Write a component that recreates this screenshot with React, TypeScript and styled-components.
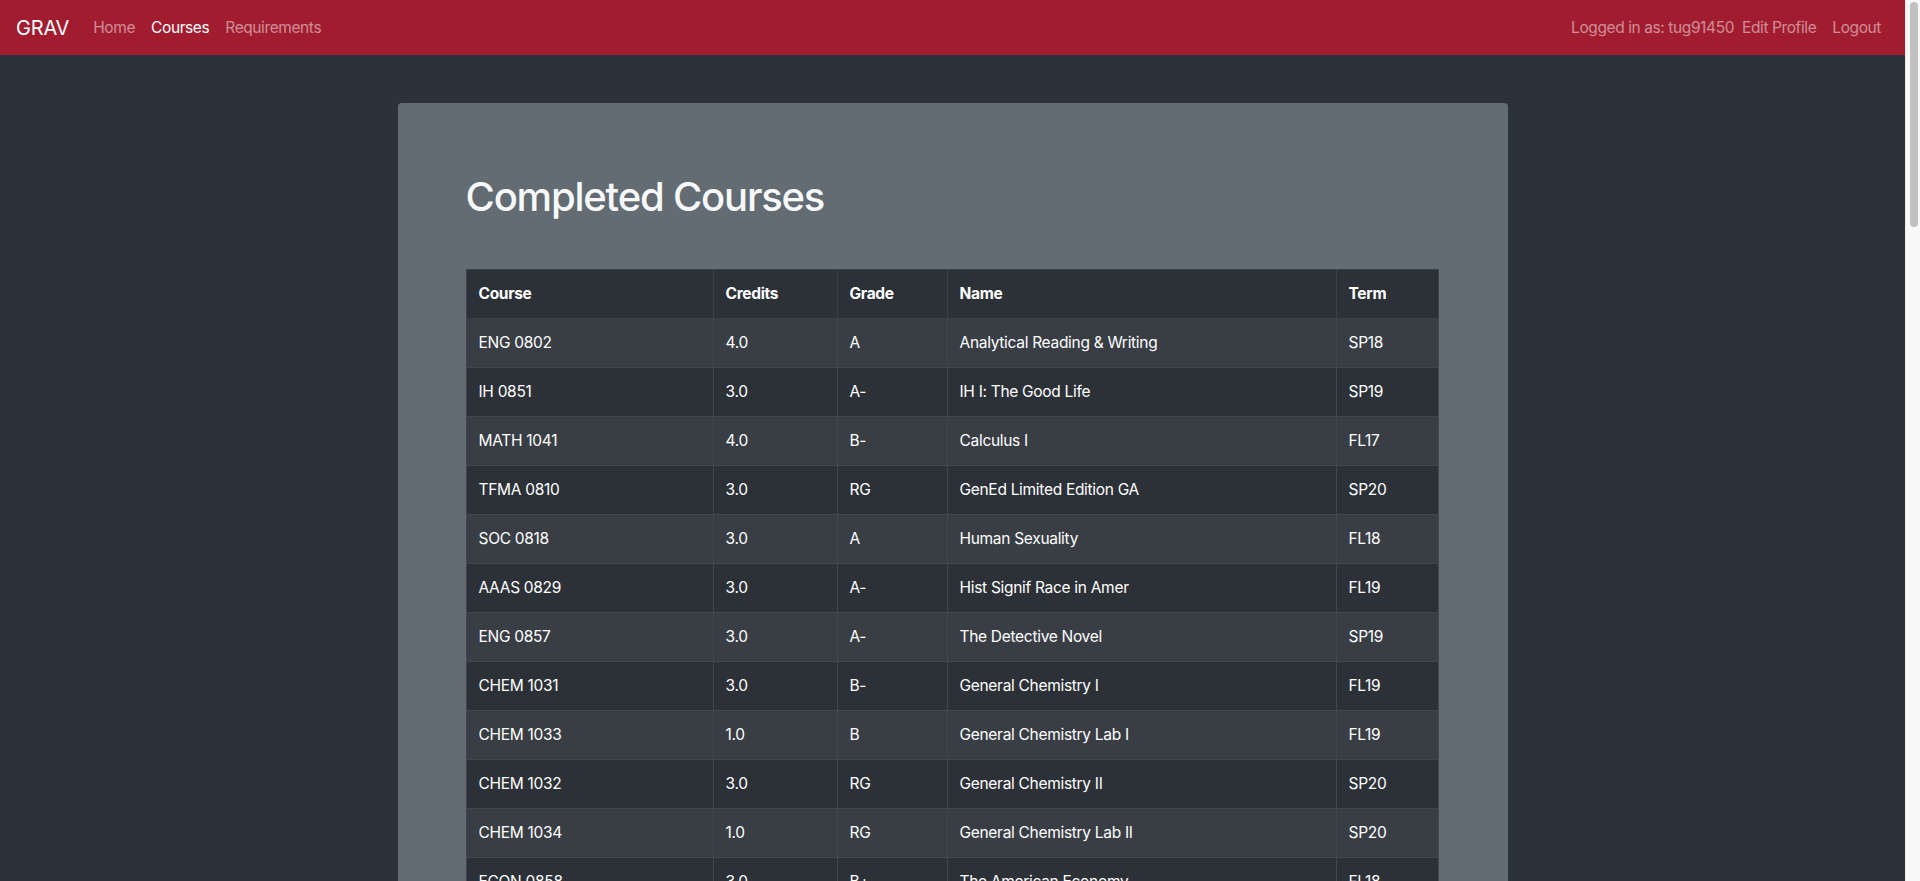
import React from "react";
import styled, { createGlobalStyle } from "styled-components";

const GlobalStyle = createGlobalStyle`
  html, body {
    margin: 0;
    padding: 0;
    background-color: #2c3239;
  }
  body {
    font-family: Inter, "Noto Sans", "Liberation Sans", sans-serif;
    font-size: 16px;
    line-height: 1.5;
    color: #ffffff;
  }
  * {
    box-sizing: border-box;
  }
`;

// leaves room for the window scrollbar shown in the shot
const Page = styled.div`
  margin-right: 15px;
`;

const ScrollTrack = styled.div`
  position: fixed;
  top: 0;
  right: 0;
  width: 15px;
  height: 100vh;
  padding: 2px 3px 0 4px;
  background-color: #f8f8f8;
  border-left: 1px solid #ececec;
`;

const ScrollThumb = styled.div`
  width: 8px;
  height: 225px;
  border-radius: 4px;
  background-color: #c1c1c1;
`;

// top bar
const Navbar = styled.nav`
  display: flex;
  align-items: center;
  justify-content: space-between;
  height: 55px;
  padding: 0 16px;
  background-color: #a21c30;
`;

const NavGroup = styled.div`
  display: flex;
  align-items: center;
`;

const Brand = styled.a`
  font-size: 20px;
  font-weight: 400;
  color: #ffffff;
  margin-right: 16px;
  letter-spacing: -0.2px;
  text-decoration: none;
`;

const NavLink = styled.a<{ $active?: boolean }>`
  padding: 8px;
  font-size: 15.5px;
  letter-spacing: -0.4px;
  color: ${(p) => (p.$active ? "#ffffff" : "rgba(255, 255, 255, 0.5)")};
  text-decoration: none;
  cursor: pointer;
`;

const NavText = styled.span`
  font-size: 15.5px;
  letter-spacing: -0.4px;
  color: rgba(255, 255, 255, 0.5);
`;

const Main = styled.main`
  padding-top: 48px;
`;

const Card = styled.section`
  width: 1110px;
  margin: 0 auto;
  padding: 70px 70px 64px 68px;
  background-color: #626c72;
  border-radius: 4px;
`;

const Title = styled.h1`
  margin: 0 0 48px 0;
  font-size: 40px;
  font-weight: 500;
  line-height: 1.2;
  letter-spacing: -1.2px;
  color: #f8f9fa;
`;

const Table = styled.table`
  width: 100%;
  table-layout: fixed;
  border-collapse: collapse;
  color: #ffffff;
  font-size: 15.5px;
  letter-spacing: -0.3px;
  border: 1px solid #3b4148;
`;

const HeadCell = styled.th<{ $w: number }>`
  width: ${(p) => p.$w}px;
  padding: 12px;
  height: 49px;
  text-align: left;
  font-weight: 700;
  background-color: #2c3137;
  border: 1px solid #3b4148;
`;

const Row = styled.tr<{ $odd: boolean }>`
  background-color: ${(p) => (p.$odd ? "#393e45" : "#2c3137")};
`;

const Cell = styled.td`
  padding: 12px;
  height: 49px;
  border: 1px solid #41474e;
  white-space: nowrap;
  overflow: hidden;
`;

const columns = [
  { label: "Course", width: 247 },
  { label: "Credits", width: 124 },
  { label: "Grade", width: 110 },
  { label: "Name", width: 389 },
  { label: "Term", width: 102 },
];

const courses = [
  ["ENG 0802", "4.0", "A", "Analytical Reading & Writing", "SP18"],
  ["IH 0851", "3.0", "A-", "IH I: The Good Life", "SP19"],
  ["MATH 1041", "4.0", "B-", "Calculus I", "FL17"],
  ["TFMA 0810", "3.0", "RG", "GenEd Limited Edition GA", "SP20"],
  ["SOC 0818", "3.0", "A", "Human Sexuality", "FL18"],
  ["AAAS 0829", "3.0", "A-", "Hist Signif Race in Amer", "FL19"],
  ["ENG 0857", "3.0", "A-", "The Detective Novel", "SP19"],
  ["CHEM 1031", "3.0", "B-", "General Chemistry I", "FL19"],
  ["CHEM 1033", "1.0", "B", "General Chemistry Lab I", "FL19"],
  ["CHEM 1032", "3.0", "RG", "General Chemistry II", "SP20"],
  ["CHEM 1034", "1.0", "RG", "General Chemistry Lab II", "SP20"],
  ["ECON 0858", "3.0", "B+", "The American Economy", "FL18"],
];

const App = () => (
  <>
    <GlobalStyle />
    <Page>
      <Navbar>
        <NavGroup>
          <Brand>GRAV</Brand>
          <NavLink>Home</NavLink>
          <NavLink $active>Courses</NavLink>
          <NavLink>Requirements</NavLink>
        </NavGroup>
        <NavGroup>
          <NavText>Logged in as: tug91450</NavText>
          <NavLink>Edit Profile</NavLink>
          <NavLink>Logout</NavLink>
        </NavGroup>
      </Navbar>
      <Main>
        <Card>
          <Title>Completed Courses</Title>
          <Table>
            <thead>
              <tr>
                {columns.map((c) => (
                  <HeadCell key={c.label} $w={c.width}>
                    {c.label}
                  </HeadCell>
                ))}
              </tr>
            </thead>
            <tbody>
              {courses.map((row, i) => (
                <Row key={row[0]} $odd={i % 2 === 0}>
                  {row.map((v, j) => (
                    <Cell key={j}>{v}</Cell>
                  ))}
                </Row>
              ))}
            </tbody>
          </Table>
        </Card>
      </Main>
    </Page>
    <ScrollTrack>
      <ScrollThumb />
    </ScrollTrack>
  </>
);

export default App;
